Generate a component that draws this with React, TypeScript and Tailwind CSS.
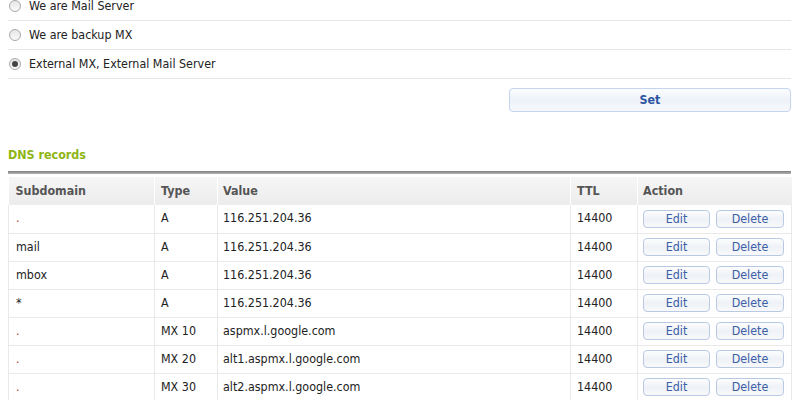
import React from "react";

const rows = [
  { s: ".", t: "A", v: "116.251.204.36" },
  { s: "mail", t: "A", v: "116.251.204.36" },
  { s: "mbox", t: "A", v: "116.251.204.36" },
  { s: "*", t: "A", v: "116.251.204.36" },
  { s: ".", t: "MX 10", v: "aspmx.l.google.com" },
  { s: ".", t: "MX 20", v: "alt1.aspmx.l.google.com" },
  { s: ".", t: "MX 30", v: "alt2.aspmx.l.google.com" },
];

function Radio({ checked }: { checked?: boolean }) {
  return (
    <span className="w-[12px] h-[12px] rounded-full border border-[#a8a8a8] bg-gradient-to-b from-[#e6e6e6] to-[#fafafa] flex items-center justify-center shrink-0">
      {checked && <span className="w-[6px] h-[6px] rounded-full bg-[#444]" />}
    </span>
  );
}

function SmallBtn({ label, w }: { label: string; w: string }) {
  return (
    <button
      className={`${w} h-[18px] rounded-[4px] border border-[#b9c9e3] bg-gradient-to-b from-[#fdfdfe] via-[#eef1f6] to-[#f8f9fb] text-[#3d5fa6] text-[12.4px] leading-[16px] text-center`}
    >
      {label}
    </button>
  );
}

export default function App() {
  return (
    <div
      className="w-[800px] h-[400px] overflow-hidden bg-white text-[#222] text-[12.4px]"
      style={{ fontFamily: '"DejaVu Sans Condensed", "DejaVu Sans", sans-serif' }}
    >
      <div className="-mt-[8px] pl-[8px] pr-[9px]">
        {[
          { l: "We are Mail Server" },
          { l: "We are backup MX" },
          { l: "External MX, External Mail Server", c: true },
        ].map((r, i) => (
          <div key={i} className="h-[29px] flex items-center gap-[8px] pl-[1px] border-b border-[#e6e6e6]">
            <Radio checked={r.c} />
            <span>{r.l}</span>
          </div>
        ))}
        <div className="flex justify-end pt-[9px]">
          <button className="w-[282px] h-[24px] rounded-[4px] border border-[#c3d4ec] bg-gradient-to-b from-[#fbfcfe] via-[#eef2f9] to-[#f6f8fc] text-[#2d54a0] font-bold text-[12.4px]">
            Set
          </button>
        </div>
        <div className="pt-[35px] text-[#8fb514] font-bold text-[12.4px] leading-[16px]">DNS records</div>
        <div className="mt-[8px] h-[3px] bg-gradient-to-b from-[#7d7d7d] to-[#b5b5b5]" />
        <table className="mt-[3px] w-[783px] border-collapse table-fixed">
          <colgroup>
            <col className="w-[146px]" />
            <col className="w-[63px]" />
            <col className="w-[353px]" />
            <col className="w-[67px]" />
            <col className="w-[154px]" />
          </colgroup>
          <thead>
            <tr className="h-[28px] bg-gradient-to-b from-[#f6f6f6] to-[#ececec] text-[#555] font-bold">
              <th className="text-left font-bold pl-[7px] border-r border-white">Subdomain</th>
              <th className="text-left font-bold pl-[6px] border-r border-white">Type</th>
              <th className="text-left font-bold pl-[5px] border-r border-white">Value</th>
              <th className="text-left font-bold pl-[6px] border-r border-white">TTL</th>
              <th className="text-left font-bold pl-[5px]">Action</th>
            </tr>
          </thead>
          <tbody>
            {rows.map((r, i) => (
              <tr key={i} className="h-[28px] border-b border-[#e9e9e9]">
                <td className={`pl-[7px] border-l border-r border-[#e9e9e9] ${r.s === "." ? "text-[#b5481c]" : ""}`}>{r.s}</td>
                <td className="pl-[6px] border-r border-[#e9e9e9]">{r.t}</td>
                <td className="pl-[5px] border-r border-[#e9e9e9]">{r.v}</td>
                <td className="pl-[6px] border-r border-[#e9e9e9]">14400</td>
                <td className="pl-[5px] border-r border-[#e9e9e9]">
                  <div className="flex gap-[6px]">
                    <SmallBtn label="Edit" w="w-[67px]" />
                    <SmallBtn label="Delete" w="w-[68px]" />
                  </div>
                </td>
              </tr>
            ))}
          </tbody>
        </table>
      </div>
    </div>
  );
}
